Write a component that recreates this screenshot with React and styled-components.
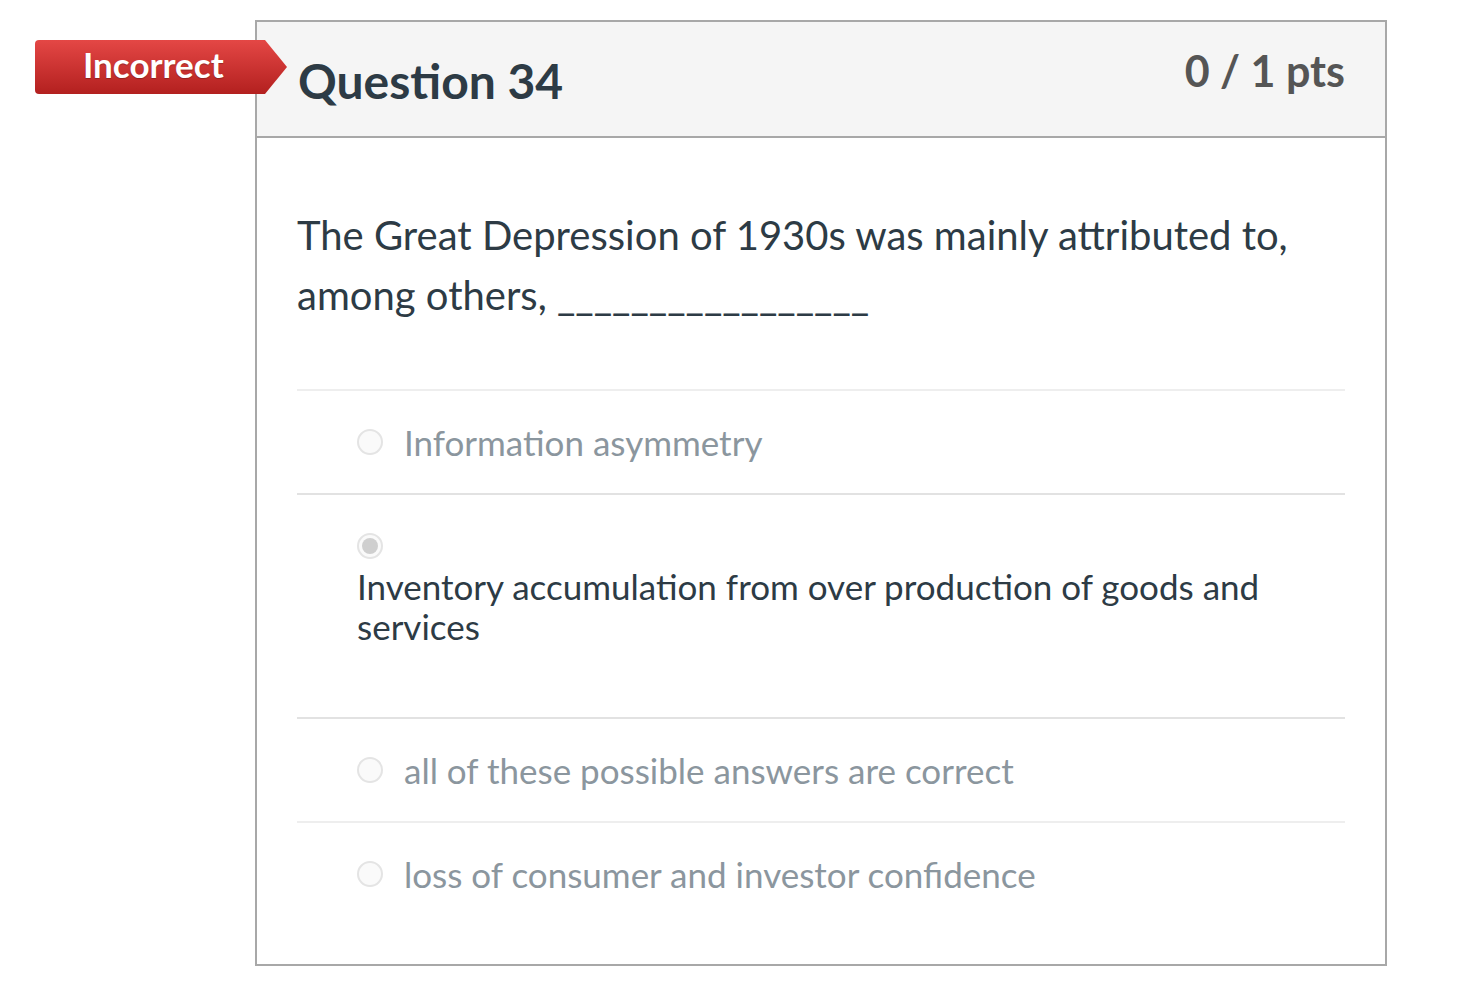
import React from 'react';
import styled, { createGlobalStyle } from 'styled-components';

const GlobalStyle = createGlobalStyle`
  body {
    margin: 0;
    background: #fff;
    font-family: Lato, "Open Sans", sans-serif;
    color: #2d3b45;
  }
`;

const Page = styled.div`
  padding: 20px 0 0 255px;
  position: relative;
`;

const Card = styled.div`
  width: 1128px;
  border: 2px solid #a8a8a8;
  background: #fff;
`;

const Header = styled.div`
  display: flex;
  justify-content: space-between;
  align-items: flex-start;
  background: #f5f5f5;
  border-bottom: 2px solid #a8a8a8;
  padding: 0 40px 0 41px;
  box-sizing: border-box;
  height: 116px;
`;

const Title = styled.h2`
  margin: 0;
  margin-top: 29px;
  font-size: 48px;
  line-height: 60px;
  font-weight: 700;
  color: #2d3b45;
`;

const Points = styled.div`
  margin-top: 24px;
  font-size: 43px;
  line-height: 50px;
  font-weight: 700;
  color: #555;
`;

const Badge = styled.div`
  position: absolute;
  left: 35px;
  top: 40px;
  width: 252px;
  height: 54px;
  background: linear-gradient(#e44745, #b3201f);
  clip-path: polygon(0 0, 230px 0, 252px 50%, 230px 100%, 0 100%);
  border-radius: 4px 0 0 4px;
  color: #fff;
  font-size: 35px;
  font-weight: 700;
  line-height: 48px;
  padding-left: 48px;
  box-sizing: border-box;
  text-shadow: 0 1px 1px rgba(0, 0, 0, 0.25);
`;

const Body = styled.div`
  padding: 67px 40px 39px 40px;
`;

const QuestionText = styled.div`
  font-size: 40px;
  line-height: 60px;
  color: #2d3b45;
  padding-bottom: 64px;
`;

const Answers = styled.div`
  display: flex;
  flex-direction: column;
`;

const Answer = styled.div`
  display: flex;
  flex-direction: ${({ selected }) => (selected ? 'column' : 'row')};
  align-items: ${({ selected }) => (selected ? 'flex-start' : 'center')};
  gap: ${({ selected }) => (selected ? '7px' : '21px')};
  padding: ${({ selected }) => (selected ? '38px 60px 71px' : '31px 60px')};
  border-top: 2px solid ${({ strong }) => (strong ? '#e2e2e2' : '#eeeeee')};
`;

const Radio = styled.span`
  flex: none;
  width: 26px;
  height: 26px;
  box-sizing: border-box;
  border-radius: 50%;
  border: 2px solid #e4e4e4;
  background: #fafafa;
  display: flex;
  align-items: center;
  justify-content: center;

  &::after {
    content: '';
    display: ${({ checked }) => (checked ? 'block' : 'none')};
    width: 16px;
    height: 16px;
    border-radius: 50%;
    background: #cfcfcf;
  }
`;

const AnswerText = styled.span`
  font-size: 35px;
  line-height: 40px;
  color: ${({ selected }) => (selected ? '#2d3b45' : '#8b969e')};
`;

const answers = [
  { id: 1, text: 'Information asymmetry' },
  { id: 2, text: 'Inventory accumulation from over production of goods and services', selected: true },
  { id: 3, text: 'all of these possible answers are correct' },
  { id: 4, text: 'loss of consumer and investor confidence' },
];

const App = () => (
  <>
    <GlobalStyle />
    <Page>
      <Badge>Incorrect</Badge>
      <Card>
        <Header>
          <Title>Question 34</Title>
          <Points>0 / 1 pts</Points>
        </Header>
        <Body>
          <QuestionText>
            The Great Depression of 1930s was mainly attributed to, among others, _________________
          </QuestionText>
          <Answers>
            {answers.map((a, i) => (
              <Answer key={a.id} selected={a.selected} strong={i === 1 || i === 2}>
                <Radio checked={a.selected} />
                <AnswerText selected={a.selected}>{a.text}</AnswerText>
              </Answer>
            ))}
          </Answers>
        </Body>
      </Card>
    </Page>
  </>
);

export default App;
